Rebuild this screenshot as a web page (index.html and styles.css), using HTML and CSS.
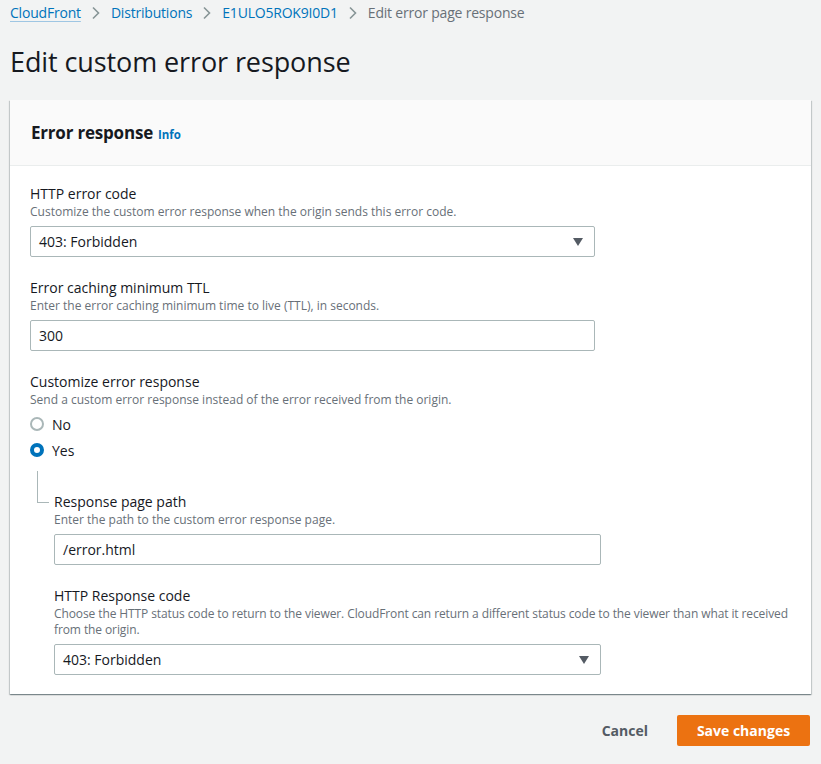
FILE: index.html
```html
<!DOCTYPE html>
<html>
<head>
<meta charset="utf-8">
<link rel="stylesheet" href="styles.css">
</head>
<body>
<nav class="crumbs">
  <a class="crumb first" href="#">CloudFront</a>
  <svg class="chev" width="10" height="14" viewBox="0 0 10 14"><path d="M2 1.5 L7.5 7 L2 12.5" fill="none" stroke="#879596" stroke-width="1.6"/></svg>
  <a class="crumb" href="#">Distributions</a>
  <svg class="chev" width="10" height="14" viewBox="0 0 10 14"><path d="M2 1.5 L7.5 7 L2 12.5" fill="none" stroke="#879596" stroke-width="1.6"/></svg>
  <a class="crumb" href="#">E1ULO5ROK9I0D1</a>
  <svg class="chev" width="10" height="14" viewBox="0 0 10 14"><path d="M2 1.5 L7.5 7 L2 12.5" fill="none" stroke="#879596" stroke-width="1.6"/></svg>
  <span class="crumb current">Edit error page response</span>
</nav>

<h1 class="title">Edit custom error response</h1>

<section class="panel">
  <header class="panel-head">
    <h2>Error response</h2><a class="info" href="#">Info</a>
  </header>
  <div class="panel-body">
    <div class="field">
      <div class="label">HTTP error code</div>
      <div class="desc">Customize the custom error response when the origin sends this error code.</div>
      <div class="control select w1"><span>403: Forbidden</span><span class="caret"></span></div>
    </div>

    <div class="field">
      <div class="label">Error caching minimum TTL</div>
      <div class="desc">Enter the error caching minimum time to live (TTL), in seconds.</div>
      <div class="control w1"><span>300</span></div>
    </div>

    <div class="field">
      <div class="label">Customize error response</div>
      <div class="desc">Send a custom error response instead of the error received from the origin.</div>
      <div class="radios">
        <div class="radio"><span class="dot"></span><span>No</span></div>
        <div class="radio"><span class="dot on"></span><span>Yes</span></div>
      </div>
    </div>

    <div class="nested">
      <div class="field">
        <div class="label">Response page path</div>
        <div class="desc">Enter the path to the custom error response page.</div>
        <div class="control w2"><span>/error.html</span></div>
      </div>
      <div class="field">
        <div class="label">HTTP Response code</div>
        <div class="desc tight">Choose the HTTP status code to return to the viewer. CloudFront can return a different status code to the viewer than what it received from the origin.</div>
        <div class="control select w2"><span>403: Forbidden</span><span class="caret"></span></div>
      </div>
    </div>
  </div>
</section>

<div class="actions">
  <button class="btn link">Cancel</button>
  <button class="btn primary">Save changes</button>
</div>
</body>
</html>
```

FILE: styles.css
```css
* { box-sizing: border-box; }
body {
  margin: 0;
  background: #f2f3f3;
  font-family: "Open Sans", "Noto Sans", sans-serif;
  color: #16191f;
  font-size: 14px;
}
.crumbs {
  display: flex;
  align-items: center;
  padding: 3px 10px 0;
  height: 22px;
  font-size: 14px;
  letter-spacing: -0.2px;
}
.crumb { color: #0073bb; text-decoration: none; }
.crumb.first { text-decoration: underline; text-decoration-color: #9fc6e3; text-underline-offset: 3px; }
.crumb.current { color: #687078; }
.chev { margin: 0 10px; }
.title {
  margin: 0;
  padding: 23px 10px 0;
  font-size: 27px;
  font-weight: 400;
  line-height: 34px;
  height: 78px;
  letter-spacing: -0.1px;
}
.panel {
  margin: 0 10px 0 10px;
  background: #fff;
  box-shadow: 0 1px 1px 0 rgba(0,28,36,.3), 1px 1px 1px 0 rgba(0,28,36,.15), -1px 1px 1px 0 rgba(0,28,36,.15);
}
.panel-head {
  height: 66px;
  background: #fafafa;
  border-bottom: 1px solid #eaeded;
  display: flex;
  align-items: center;
  padding: 0 21px;
}
.panel-head h2 {
  margin: 0;
  font-size: 17px;
  font-weight: 700;
  letter-spacing: -0.2px;
}
.info {
  margin-left: 5px;
  font-size: 11.5px;
  font-weight: 700;
  color: #0073bb;
  text-decoration: none;
  padding-top: 3px;
}
.panel-body { padding: 18px 20px 19px; }
.field + .field { margin-top: 21px; }
.label { font-size: 14px; line-height: 20px; color: #16191f; }
.desc { font-size: 12px; line-height: 16px; color: #687078; }
.desc.tight { letter-spacing: -0.1px; }
.control {
  margin-top: 6px;
  height: 31px;
  border: 1px solid #aab7b8;
  border-radius: 2px;
  display: flex;
  align-items: center;
  padding: 0 8px;
  font-size: 14px;
  background: #fff;
}
.w1 { width: 565px; }
.w2 { width: 547px; }
.select { justify-content: space-between; }
.caret {
  width: 0; height: 0;
  border-left: 5px solid transparent;
  border-right: 5px solid transparent;
  border-top: 8px solid #545b64;
  margin-right: 3px;
}
.radios { margin-top: 3px; }
.radio { display: flex; align-items: center; height: 26px; gap: 8px; }
.dot {
  width: 14px; height: 14px;
  border-radius: 50%;
  border: 2px solid #aab7b8;
  background: #fff;
}
.dot.on { border: 4px solid #0073bb; }
.nested {
  position: relative;
  padding-left: 24px;
  margin-top: 29px;
}
.nested::before {
  content: "";
  position: absolute;
  left: 7px;
  top: -21px;
  width: 11px;
  height: 31px;
  border-left: 1px solid #aab7b8;
  border-bottom: 1px solid #aab7b8;
}
.actions {
  display: flex;
  justify-content: flex-end;
  align-items: center;
  padding: 21px 11px 0 0;
  gap: 29px;
}
.btn {
  font-family: inherit;
  font-size: 14px;
  font-weight: 700;
  border: none;
  cursor: pointer;
}
.btn.link { background: none; color: #545b64; padding: 0; }
.btn.primary {
  background: #ec7211;
  color: #fff;
  height: 31px;
  width: 133px;
  border-radius: 2px;
}
```
